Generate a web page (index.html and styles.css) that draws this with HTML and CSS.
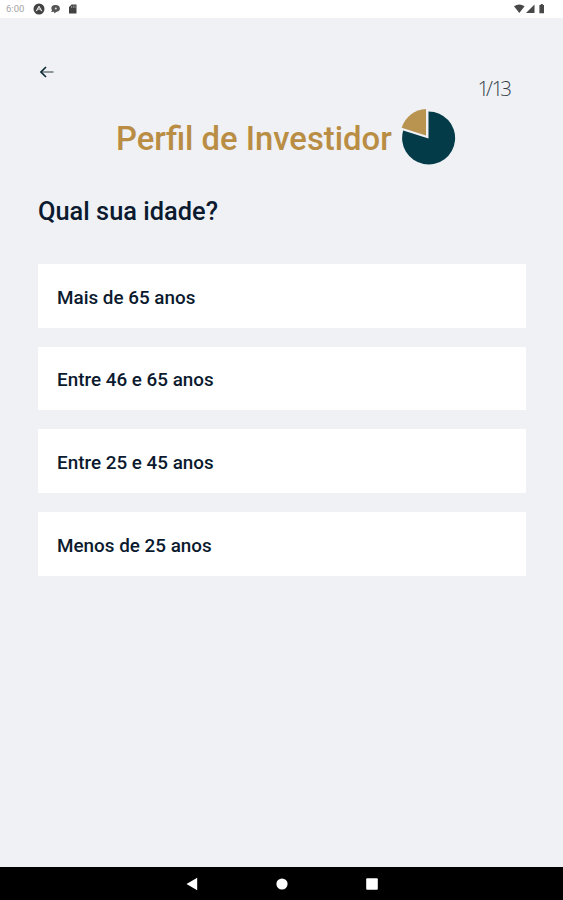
FILE: index.html
```html
<!DOCTYPE html>
<html lang="pt-BR">
<head>
<meta charset="utf-8">
<title>Perfil de Investidor</title>
<link rel="stylesheet" href="styles.css">
</head>
<body>
<div class="app">
  <header class="status">
    <div class="status-left">
      <span class="clock">6:00</span>
      <svg width="46" height="12" viewBox="0 0 46 12">
        <circle cx="6" cy="6" r="5.500" fill="#424242"/>
        <path d="M3.200 8.200 6 3.200l2.800 5M4.400 7l1.600-1.400L7.600 7" fill="none" stroke="#fff" stroke-width="1"/>
        <path d="M18.300 5.500a4.300 3.500 0 1 1 5.500 3.300l-2.400 1.400-.4-1.400-3 .2 1-1.500z" fill="#555"/>
        <circle cx="22.800" cy="5.400" r="1" fill="#ddd"/>
        <path d="M38.600 1.500H43.500V10.500H36V4z" fill="#424242"/>
        <path d="M38.500 3v2M40.300 2.500V5M42 2.500V5" stroke="#aaa" stroke-width=".7"/>
      </svg>
    </div>
    <svg width="32" height="12" viewBox="0 0 32 12">
      <path d="M0 3.300Q5.300-.3 10.600 3.300L5.300 10z" fill="#484848"/>
      <path d="M20.500 1.500V10H12z" fill="#484848"/>
      <path d="M26.800 1h2v1h1.200v8.200h-4.600V2h1.400z" fill="#484848"/>
    </svg>
  </header>
  <main class="content">
    <nav class="top">
      <svg class="back" width="14" height="12" viewBox="0 0 14 12">
        <path d="M2 6h11.500" fill="none" stroke="#7d878b" stroke-width="1.700"/>
        <path d="M6 1 1 6l5 5" fill="none" stroke="#0c2b33" stroke-width="1.600"/>
      </svg>
      <span class="step"><span class="one">1</span><span class="slash">/</span><span class="one">1</span>3</span>
    </nav>
    <div class="heading">
      <h1>Perfil de Investidor</h1>
      <svg width="56" height="58" viewBox="0 0 56 58">
        <path d="M27.500 30.500V3.500A26.500 26.500 0 1 1 2.200 22.500z" fill="#033b49"/>
        <path d="M25 27.500V1A26.500 26.500 0 0 0 .7 19.800z" fill="#b89450"/>
      </svg>
    </div>
    <h2>Qual sua idade?</h2>
    <ul class="options">
      <li>Mais de 65 anos</li>
      <li>Entre 46 e 65 anos</li>
      <li>Entre 25 e 45 anos</li>
      <li>Menos de 25 anos</li>
    </ul>
  </main>
  <footer class="navbar">
    <svg width="12" height="14" viewBox="0 0 12 14"><path d="M11.200 .8V13.200L.5 7z" fill="#fff"/></svg>
    <svg width="12" height="12" viewBox="0 0 12 12"><circle cx="6" cy="6" r="5.600" fill="#fff"/></svg>
    <svg width="12" height="12" viewBox="0 0 12 12"><rect x=".2" y=".2" width="11.600" height="11.600" rx="1" fill="#fff"/></svg>
  </footer>
</div>
</body>
</html>
```
FILE: styles.css
```css
* { box-sizing: border-box; }
body { margin: 0; font-family: Roboto, sans-serif; background: #eff1f5; color: #0b1a2e; }
.app { height: 900px; display: flex; flex-direction: column; }
.status {
  height: 18px; padding: 3px 17px 3px 6px; background: #fff;
  display: flex; justify-content: space-between; align-items: center;
}
.status-left { display: flex; align-items: center; gap: 7px; }
.clock { width: 20px; font-size: 9.500px; line-height: 12px; color: #a5a5a5; white-space: nowrap; }
svg { display: block; flex: none; }
.content { flex: 1; padding: 48px 37px 0 38px; }
.top { height: 40px; display: flex; justify-content: space-between; align-items: flex-start; padding: 0 14px 0 2px; }
.step { margin-top: 10px; font: 300 20.500px/24px "Open Sans", sans-serif; color: #343e48; }
.one { letter-spacing: -3px; }
.slash { letter-spacing: -1.500px; }
.heading { display: flex; align-items: center; gap: 9px; height: 60px; padding-left: 78px; margin-top: 1px; }
h1, h2 { margin: 0; font-weight: 500; white-space: nowrap; }
h1 { padding-top: 4px; font-size: 32.800px; line-height: 40px; color: #b98d43; }
h2 { margin-top: 28px; font-size: 25.400px; line-height: 32px; }
.options { list-style: none; margin: 37px 0 0; padding: 0; display: grid; gap: 19px; }
.options li {
  height: 63.660px; padding: 4px 19px 0; background: #fff;
  display: flex; align-items: center; font-size: 18.850px; font-weight: 500;
}
.navbar { height: 33px; background: #000; display: flex; justify-content: center; align-items: center; gap: 78px; }
```
